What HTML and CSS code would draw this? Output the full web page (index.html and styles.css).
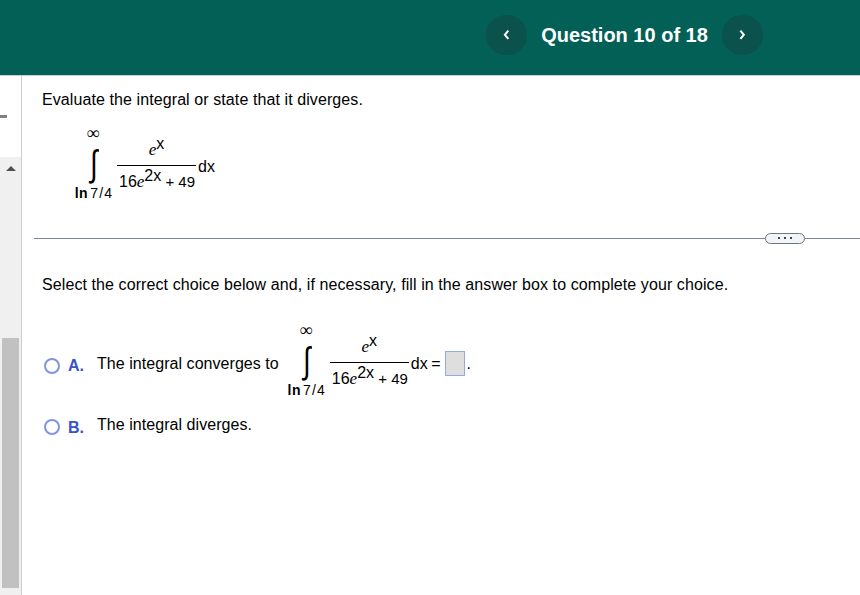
FILE: index.html
```html
<!DOCTYPE html>
<html lang="en">
  <head>
    <meta charset="UTF-8" />
    <meta name="viewport" content="width=device-width, initial-scale=1.0" />
    <title>Question 10 of 18</title>
    <link rel="stylesheet" href="styles.css">
  </head>
  <body>
    <header class="header">
      <button class="nav-btn" aria-label="Previous">
        <svg width="8" height="12" viewBox="0 0 8 12"><path d="M5.3 1.7 1.9 5.8l3.4 4.1" /></svg>
      </button>
      <h1 class="title">Question 10 of 18</h1>
      <button class="nav-btn" aria-label="Next">
        <svg width="8" height="12" viewBox="0 0 8 12"><path d="M1.4 1.7 4.8 5.8 1.4 9.9" /></svg>
      </button>
    </header>

    <div class="main">
      <aside class="side">
        <div class="side-top"><span class="dash"></span></div>
        <div class="scrollbar">
          <span class="arrow"></span>
          <span class="thumb"></span>
        </div>
      </aside>

      <section class="question">
        <p class="prompt">Evaluate the integral or state that it diverges.</p>
        <div class="math">
          <div class="integral">
            <span class="upper">∞</span>
            <span class="sign">∫</span>
            <span class="lower"><b>ln</b><span>7/4</span></span>
          </div>
          <div class="fraction">
            <span class="num"><i>e</i><sup>x</sup></span>
            <span class="den">16<i>e</i><sup>2x</sup><span class="plus"> + 49</span></span>
          </div>
          <span class="dx">dx</span>
        </div>

        <div class="divider"><span class="more"><i></i><i></i><i></i></span></div>

        <p class="select">Select the correct choice below and, if necessary, fill in the answer box to complete your choice.</p>

        <div class="choice choice-a">
          <span class="radio"></span>
          <span class="letter">A.</span>
          <span class="text">The integral converges to</span>
          <div class="math">
            <div class="integral">
              <span class="upper">∞</span>
              <span class="sign">∫</span>
              <span class="lower"><b>ln</b><span>7/4</span></span>
            </div>
            <div class="fraction">
              <span class="num"><i>e</i><sup>x</sup></span>
              <span class="den">16<i>e</i><sup>2x</sup><span class="plus"> + 49</span></span>
            </div>
            <span class="dx">dx =</span>
          </div>
          <span class="answer"></span>
          <span class="text dot">.</span>
        </div>

        <div class="choice choice-b">
          <span class="radio"></span>
          <span class="letter">B.</span>
          <span class="text">The integral diverges.</span>
        </div>
      </section>
    </div>
  </body>
</html>
```
FILE: styles.css
```css
* {
  box-sizing: border-box;
}

body {
  margin: 0;
  height: 595px;
  overflow: hidden;
  background: #fff;
  color: #000;
  font: 16px/20px "Liberation Sans", Arial, sans-serif;
}

p {
  margin: 0;
}

/* header */
.header {
  display: flex;
  align-items: center;
  height: 76px;
  padding: 0 0 6px 486px;
  background: #026056;
  border-bottom: 1px solid #c8cdd8;
}

.nav-btn {
  display: flex;
  align-items: center;
  justify-content: center;
  width: 41px;
  height: 40px;
  padding: 0;
  border: 0;
  border-radius: 50%;
  background: #0b514c;
}

.nav-btn svg {
  fill: none;
  stroke: #fff;
  stroke-width: 2;
}

.title {
  width: 195px;
  margin: 0;
  font-size: 20px;
  line-height: 24px;
  text-align: center;
  white-space: nowrap;
  color: #fff;
}

.main {
  display: flex;
  height: 519px;
}

/* left strip */
.side {
  width: 22px;
  border-right: 1px solid #c8cdd8;
}

.side-top {
  height: 81px;
  padding-top: 39px;
}

.dash {
  display: block;
  width: 7px;
  height: 3px;
  background: #808080;
}

.scrollbar {
  height: 438px;
  padding: 9px 0 0 2px;
  background: #f0f0f0;
}

.arrow {
  display: block;
  width: 0;
  margin-left: 4px;
  border: 5px solid transparent;
  border-top: 0;
  border-bottom-color: #505050;
}

.thumb {
  display: block;
  width: 17px;
  height: 250px;
  margin-top: 167px;
  background: #c1c1c1;
}

/* question */
.question {
  flex: 1;
  padding: 14px 0 0 12px;
}

.prompt,
.select {
  padding-left: 8px;
  letter-spacing: 0.09px;
  white-space: nowrap;
}

.math {
  display: flex;
  height: 76px;
}

.question > .math {
  margin: 16px 0 0 40px;
}

.integral {
  display: flex;
  flex-direction: column;
  align-items: center;
  width: 40px;
  white-space: nowrap;
}

.upper {
  height: 16px;
  margin-left: -2px;
  font: 18px/14px "Liberation Serif", serif;
}

.sign {
  height: 43px;
  font: 200 34px/42px "DejaVu Sans", sans-serif;
  transform: scale(0.8, 1.08);
}

.lower {
  display: flex;
  gap: 2px;
  font-size: 14px;
  line-height: 16px;
}

.lower b {
  letter-spacing: 0.5px;
}

.lower span {
  letter-spacing: 1.2px;
}

.fraction {
  width: 79px;
  margin-left: 3px;
  white-space: nowrap;
}

.fraction i {
  font-family: "Liberation Serif", serif;
  font-size: 17px;
}

.fraction sup {
  font-size: 16px;
  line-height: 0;
  vertical-align: 6px;
}

.num {
  display: block;
  height: 40px;
  padding-top: 14px;
  border-bottom: 1px solid #000;
  text-align: center;
}

.den {
  display: block;
  padding: 6px 0 0 2px;
}

.plus {
  font-size: 15px;
}

.dx {
  padding: 31px 0 0 2px;
  word-spacing: -1px;
  white-space: nowrap;
}

/* divider with handle */
.divider {
  display: flex;
  align-items: center;
  height: 12px;
  margin-top: 30px;
}

.divider::before,
.divider::after {
  content: "";
  height: 1px;
  background: #7a8597;
}

.divider::before {
  width: 731px;
}

.divider::after {
  flex: 1;
}

.more {
  display: flex;
  align-items: center;
  justify-content: center;
  gap: 4px;
  width: 40px;
  height: 11px;
  border: 1px solid #6b7585;
  border-radius: 6px;
  background: #f3f4f8;
}

.more i {
  width: 2px;
  height: 2px;
  background: #444;
}

.select {
  margin-top: 31px;
}

/* choices */
.choice {
  display: flex;
  padding-left: 10px;
}

.choice-a {
  height: 76px;
  margin-top: 28px;
}

.choice-b {
  margin-top: 16px;
}

.radio {
  width: 16px;
  height: 16px;
  margin-top: 4px;
  border: 2px solid #8095e0;
  border-radius: 50%;
}

.choice-a .radio {
  margin-top: 35px;
}

.letter {
  width: 29px;
  margin: 3px 0 0 8px;
  font-weight: bold;
  color: #3952c8;
}

.choice-a .letter {
  margin-top: 33px;
}

.choice .text {
  letter-spacing: 0.05px;
  white-space: nowrap;
}

.choice-a .text {
  padding-top: 31px;
}

.choice-a .math {
  margin-left: 8px;
}

.answer {
  width: 20px;
  height: 25px;
  margin: 28px 0 0 5px;
  border: 1px solid #93abe0;
  background: #dedede;
}

.choice .dot {
  margin-left: 1px;
}
```
